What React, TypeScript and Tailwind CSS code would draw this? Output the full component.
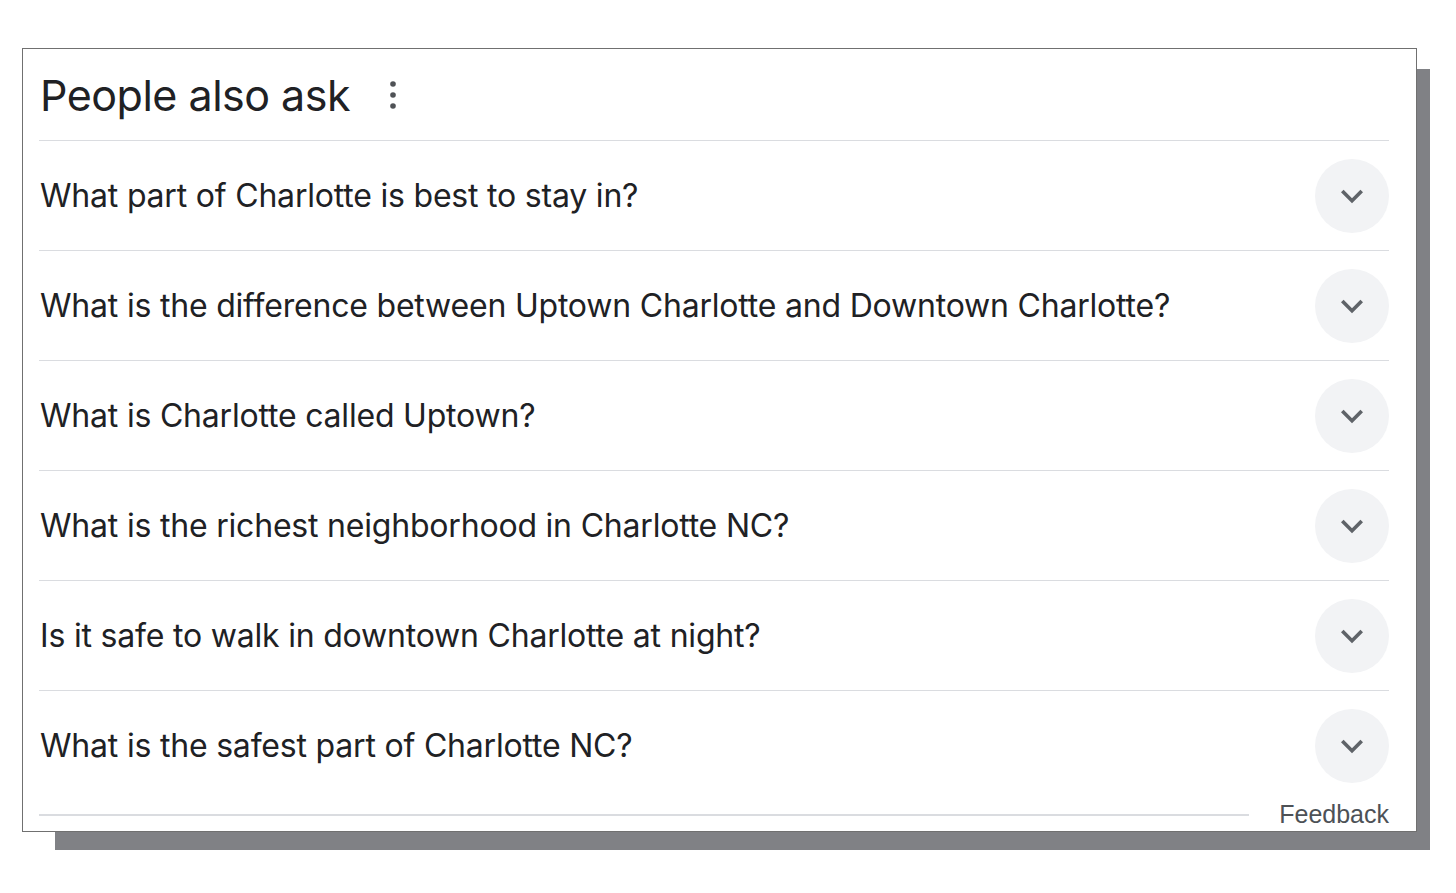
import React from "react";

const questions = [
  "What part of Charlotte is best to stay in?",
  "What is the difference between Uptown Charlotte and Downtown Charlotte?",
  "What is Charlotte called Uptown?",
  "What is the richest neighborhood in Charlotte NC?",
  "Is it safe to walk in downtown Charlotte at night?",
  "What is the safest part of Charlotte NC?",
];

function Chevron() {
  return (
    <div className="flex h-[74px] w-[74px] items-center justify-center rounded-full bg-[#f2f3f5]">
      <svg width="44" height="44" viewBox="0 0 24 24" fill="#5f6368">
        <path d="M7.41 8.59 12 13.17l4.59-4.58L18 10l-6 6-6-6z" />
      </svg>
    </div>
  );
}

export default function App() {
  return (
    <div className="min-h-[893px] w-[1456px] bg-white pl-[22px] pt-[48px]" style={{ fontFamily: "Inter, Roboto, sans-serif" }}>
      <div className="relative w-[1395px]">
        <div className="absolute bottom-[-18px] left-[33px] right-[-13px] top-[21px] bg-[#808185]" />
        <div className="relative flex h-[784px] flex-col border-[1.5px] border-[#707070] bg-white pl-[16px] pr-[27px]">
          <div className="flex h-[91px] shrink-0 items-center pl-[1px] pt-[1px]">
            <span className="text-[43px] leading-none tracking-[-0.5px] text-[#202124]">People also ask</span>
            <svg className="ml-[37px]" width="12" height="30" viewBox="0 0 12 30" fill="#4f5256">
              <circle cx="6" cy="4" r="2.8" />
              <circle cx="6" cy="15" r="2.8" />
              <circle cx="6" cy="26" r="2.8" />
            </svg>
          </div>
          {questions.map((q) => (
            <div key={q} className="flex h-[110px] shrink-0 items-center justify-between border-t-[1.5px] border-[#dadce0] pl-[1px]">
              <span className="text-[32px] leading-none tracking-[-0.2px] text-[#202124]">{q}</span>
              <Chevron />
            </div>
          ))}
          <div className="flex flex-1 items-center pb-[2px]">
            <div className="h-[2px] flex-1 bg-[#dadce0]" />
            <span className="ml-[30px] text-[25px] leading-none text-[#4d5156]" style={{ fontFamily: "'Liberation Sans', Arial, sans-serif" }}>
              Feedback
            </span>
          </div>
        </div>
      </div>
    </div>
  );
}
